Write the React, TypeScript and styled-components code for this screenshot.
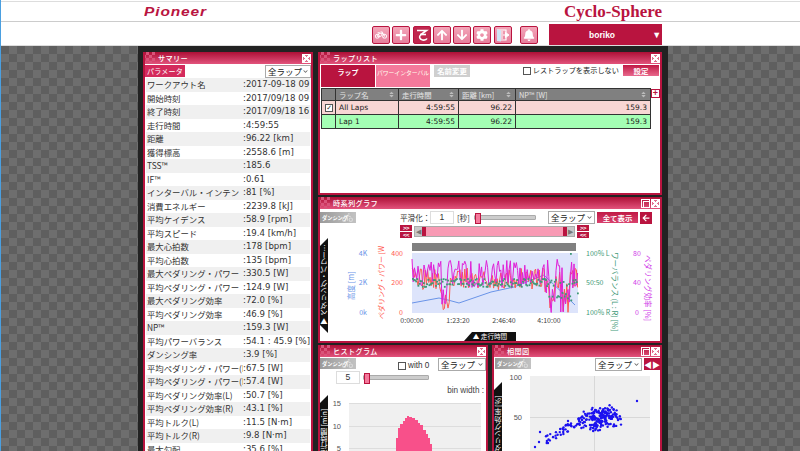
import React from 'react';
import styled, { createGlobalStyle } from 'styled-components';
import { FaBicycle, FaBiking, FaPlus, FaArrowUp, FaArrowDown, FaCog, FaBell, FaArrowLeft, FaSort, FaChevronDown } from 'react-icons/fa';

const crimson = '#b9143f';
const jp = '"Noto Sans CJK JP", "Liberation Sans", sans-serif';

const GlobalStyle = createGlobalStyle`
  html, body { margin: 0; padding: 0; background: #fff; overflow: hidden; }
  body { font-family: "Liberation Sans", "Noto Sans CJK JP", sans-serif; }
  * { box-sizing: border-box; }
`;

const Page = styled.div`
  width: 800px;
  height: 451px;
  overflow: hidden;
  display: flex;
  flex-direction: column;
  border-left: 1px solid #4a9fe0;
`;

const BrandBar = styled.header`
  height: 21px;
  flex: none;
  margin-top: 1px;
  border-top: 1px solid #ddd;
  border-bottom: 1px solid #ccc;
  padding: 0 138px 0 143px;
  display: flex;
  align-items: center;
  justify-content: space-between;
`;

const Pioneer = styled.span`
  font: italic bold 13px "Liberation Sans", sans-serif;
  letter-spacing: 0.75px;
  color: ${crimson};
  transform: scaleX(1.19);
  transform-origin: left center;
`;

const Cyclo = styled.span`
  font: bold 17px "Liberation Serif", serif;
  color: ${crimson};
`;

const ToolBar = styled.div`
  height: 24px;
  flex: none;
  padding: 2px 137px 0 371px;
  display: flex;
  align-items: flex-start;
  border-bottom: 1px solid #ddd;
`;

const ToolButton = styled.div<{ $dark?: boolean }>`
  width: 18px;
  height: 18px;
  margin-top: 2px;
  margin-right: 2.3px;
  flex: none;
  display: flex;
  align-items: center;
  justify-content: center;
  color: #fff;
  font-size: 12px;
  border: 1px solid ${crimson};
  border-radius: 2px;
  background: ${(p) => (p.$dark ? '#c0284f' : 'linear-gradient(#f3a6b9, #e67f9c)')};
`;

const BellButton = styled(ToolButton)`
  margin-left: 6px;
  margin-right: 11px;
`;

const UserSelect = styled.div`
  width: 113px;
  height: 21px;
  background: ${crimson};
  color: #fff;
  font: bold 8.5px "Liberation Sans", sans-serif;
  display: flex;
  align-items: center;
  justify-content: space-between;
  padding: 0 1px 0 40px;
  & > i {
    font-style: normal;
    font-size: 9px;
  }
`;

const Backdrop = styled.main`
  flex: 1;
  min-height: 0;
  padding-left: 137px;
  background-color: #666;
  background-image: repeating-conic-gradient(#6e6e6e 0 25%, #5f5f5f 0 50%);
  background-size: 16px 16px;
`;

const Center = styled.div`
  width: 530px;
  height: 500px;
  background: #222;
  padding: 6px 6px 0 5px;
  display: grid;
  grid-template-columns: 170px 344px;
  column-gap: 5px;
  align-items: start;
`;

const Stack = styled.div`
  display: flex;
  flex-direction: column;
  gap: 2px;
`;

const TwoUp = styled.div`
  display: grid;
  grid-template-columns: 170px 170px;
  column-gap: 4px;
`;

const Panel = styled.section<{ $h: number }>`
  position: relative;
  height: ${(p) => p.$h}px;
  background: #fff;
  border: 2px solid ${crimson};
  border-top: 0;
  overflow: hidden;
`;

const TitleBar = styled.div`
  height: 12px;
  margin: 0 -2px;
  padding-right: 2px;
  display: flex;
  align-items: center;
  gap: 1px;
  color: #fff;
  font: 500 7.2px ${jp};
  letter-spacing: 0.3px;
  background: linear-gradient(#ad0f36, #e2537c);
  &::before {
    content: '';
    width: 12px;
    height: 12px;
    margin-right: 2px;
    background: repeating-conic-gradient(#d9547a 0 25%, transparent 0 50%);
    background-size: 6px 6px;
  }
  & > span {
    flex: 1;
  }
`;

const WinBtn = styled.div`
  width: 9px;
  height: 9px;
  flex: none;
  border: 1px solid #fff;
`;

const CloseBtn = styled(WinBtn)`
  background:
    linear-gradient(45deg, transparent 42%, #fff 42% 58%, transparent 58%),
    linear-gradient(-45deg, transparent 42%, #fff 42% 58%, transparent 58%),
    #e0708e;
`;

const SquareBtn = styled(WinBtn)`
  &::after {
    content: '';
    display: block;
    width: 5px;
    height: 5px;
    margin: 1px;
    border: 1px solid #fff;
  }
`;

const SummaryHead = styled.div`
  height: 13px;
  margin-top: 1px;
  display: flex;
  align-items: flex-start;
  justify-content: space-between;
`;

const ParamTag = styled.div`
  width: 40px;
  height: 12px;
  background: #d42a5c;
  color: #fff;
  font: 7px/12px ${jp};
  letter-spacing: 0.2px;
  text-align: center;
`;

const LapSelect = styled.div<{ $w?: number }>`
  width: ${(p) => p.$w ?? 47}px;
  height: 13px;
  flex: none;
  border: 1px solid #aaa;
  background: #fff;
  color: #222;
  font: 8.5px/11px ${jp};
  padding: 0 2px;
  display: flex;
  align-items: center;
  justify-content: space-between;
  white-space: nowrap;
  & > svg {
    font-size: 5px;
    color: #666;
  }
`;

const SummaryRow = styled.div<{ $shade: boolean }>`
  height: 13.5px;
  margin: 0 1px;
  padding-left: 1px;
  display: flex;
  align-items: center;
  color: #333;
  font: 8.4px/13px ${jp};
  white-space: nowrap;
  overflow: hidden;
  background: ${(p) => (p.$shade ? '#f0f0f0' : '#fff')};
`;

const RowLabel = styled.div`
  width: 96px;
  flex: none;
  overflow: hidden;
`;

const RowValue = styled.div`
  font-family: "DejaVu Sans", ${jp};
  font-size: 8.6px;
`;

const LapTabs = styled.div`
  height: 24px;
  padding: 1px 1px 0;
  display: flex;
  align-items: flex-start;
`;

const LapTab = styled.div<{ $active?: boolean }>`
  width: 54px;
  height: 22px;
  margin-right: ${(p) => (p.$active ? '1px' : '0')};
  color: ${(p) => (p.$active ? '#fff' : '#ffe')};
  background: ${(p) => (p.$active ? '#b9143f' : '#f4799b')};
  font: ${(p) => (p.$active ? 'bold 7px' : '5.8px')}/15px ${jp};
  text-align: center;
  white-space: nowrap;
  overflow: hidden;
`;

const RenameBtn = styled.div`
  width: 36px;
  height: 12px;
  margin-left: 4px;
  background: #cfcfcf;
  color: #fff;
  font: bold 7.4px/12px ${jp};
  text-align: center;
`;

const RestToggle = styled.label`
  margin-left: auto;
  display: flex;
  align-items: center;
  gap: 2px;
  font: 7.2px/11px ${jp};
  color: #222;
  white-space: nowrap;
`;

const CheckBox = styled.span<{ $checked?: boolean }>`
  display: block;
  width: 8px;
  height: 8px;
  flex: none;
  border: 1px solid #555;
  background: #fff;
  color: #333;
  font: bold 7px/6px "DejaVu Sans", sans-serif;
  &::after {
    content: '${(p) => (p.$checked ? '✓' : '')}';
  }
`;

const SettingBtn = styled.div`
  width: 36px;
  height: 11px;
  margin-left: 4px;
  background: linear-gradient(#c01a46, #e8688c);
  color: #fff;
  font: bold 7.4px/11px ${jp};
  text-align: center;
`;

const TableRow = styled.div`
  display: flex;
  align-items: flex-start;
  padding-left: 1px;
`;

const LapTable = styled.table`
  width: 330px;
  flex: none;
  border-collapse: collapse;
  table-layout: fixed;
  font: 7.5px "DejaVu Sans", ${jp};
  & th, & td {
    border: 1px solid #333;
    padding: 0 3px;
    white-space: nowrap;
  }
  & th {
    height: 12px;
    background: #808080;
    color: #e4e4e4;
    font: 7.4px ${jp};
    text-align: left;
  }
  & td {
    height: 14px;
    color: #222;
    text-align: right;
  }
  & td:nth-child(2) {
    text-align: left;
  }
  & th > svg {
    float: right;
    margin-top: 2px;
    font-size: 7px;
    color: #bbb;
  }
`;

const LapRow = styled.tr<{ $bg: string }>`
  background: ${(p) => p.$bg};
`;

const PlusBtn = styled.div`
  width: 9px;
  height: 9px;
  flex: none;
  margin-top: 1px;
  border: 1px solid ${crimson};
  color: ${crimson};
  font: bold 9px/7px "Liberation Sans", sans-serif;
  text-align: center;
`;

const DancingBadge = styled.div`
  position: relative;
  width: 36px;
  height: 11px;
  flex: none;
  background: linear-gradient(90deg, #9a9a9a, #c2c2c2);
  color: #fff;
  font: bold 5.2px/12px ${jp};
  padding-left: 2px;
  white-space: nowrap;
  overflow: hidden;
  & > svg {
    position: absolute;
    right: 3px;
    top: 0;
    font-size: 11px;
    color: rgba(255, 255, 255, 0.45);
  }
`;

const Controls = styled.div`
  height: 13px;
  margin-top: 2px;
  display: flex;
  align-items: center;
  color: #333;
  font: 7.6px ${jp};
  white-space: nowrap;
`;

const SmoothLabel = styled.span`
  margin-left: 44px;
  width: 30px;
`;

const SecondsLabel = styled.span`
  width: 20px;
  padding-left: 3px;
`;

const NumBox = styled.div<{ $w: number }>`
  width: ${(p) => p.$w}px;
  height: 13px;
  flex: none;
  border: 1px solid #ddd;
  background: #fff;
  font: 8.6px/11px "Liberation Sans", sans-serif;
  text-align: center;
  color: #333;
`;

const SliderTrack = styled.div<{ $w: number }>`
  position: relative;
  width: ${(p) => p.$w}px;
  height: 5px;
  flex: none;
  background: #ccc;
  border: 1px solid #aaa;
  border-radius: 1px;
  &::before {
    content: '';
    position: absolute;
    left: 0;
    top: -3px;
    width: 4px;
    height: 9px;
    background: #f4799b;
    border: 1px solid ${crimson};
  }
`;

const SpacedSelect = styled(LapSelect)`
  margin-left: 12px;
`;

const AllBtn = styled.div`
  width: 41px;
  height: 11px;
  margin-left: 2px;
  background: linear-gradient(#c01a46, #d8406c);
  color: #fff;
  font: bold 7.4px/11px ${jp};
  text-align: center;
`;

const IconBtn = styled.div<{ $w: number; $ml: number }>`
  width: ${(p) => p.$w}px;
  height: 12px;
  margin-left: ${(p) => p.$ml}px;
  flex: none;
  background: ${crimson};
  color: #fff;
  font-size: 8px;
  display: flex;
  align-items: center;
  justify-content: center;
`;

const RangeRow = styled.div`
  margin-left: 80px;
  height: 14px;
  display: flex;
  align-items: center;
  gap: 2px;
`;

const StepPair = styled.div`
  width: 12px;
  display: flex;
  flex-direction: column;
  gap: 1px;
`;

const StepBtn = styled.div`
  height: 6px;
  background: ${crimson};
  color: #fff;
  font: bold 6px/6px "Liberation Sans", sans-serif;
  text-align: center;
  letter-spacing: -0.5px;
`;

const RangeBar = styled.div`
  width: 161px;
  height: 11px;
  display: flex;
  background: #ccc;
  border: 1px solid #aaa;
`;

const RangeEnd = styled.div`
  width: 7px;
  background: #c8c8c8;
  flex: none;
  color: #777;
  font: 7px/9px "Liberation Sans", sans-serif;
  text-align: center;
`;

const RangeFill = styled.div`
  flex: 1;
  background: #f89ab4;
  border-left: 4px solid ${crimson};
  border-right: 4px solid ${crimson};
`;

const Chart = styled.svg`
  display: block;
  font-family: ${jp};
`;

const SideTab = styled.div<{ $top: number; $h: number }>`
  position: absolute;
  left: 0;
  top: ${(p) => p.$top}px;
  width: 8px;
  height: ${(p) => p.$h}px;
  background: #111;
  clip-path: polygon(0 0, 100% 8px, 100% calc(100% - 8px), 0 100%);
  color: #fff;
  font: 7.2px/8px ${jp};
  writing-mode: vertical-rl;
  transform: rotate(180deg);
  white-space: nowrap;
  overflow: hidden;
  padding-top: 8px;
`;

const BottomTab = styled.div`
  position: absolute;
  left: 144px;
  bottom: 0;
  width: 52px;
  height: 9px;
  background: #111;
  clip-path: polygon(8px 0, 100% 0, 100% 100%, 0 100%);
  color: #fff;
  font: 6.6px/9px ${jp};
  text-align: center;
  white-space: nowrap;
`;

const HistRow = styled.div`
  display: flex;
  align-items: flex-start;
  padding-top: 1px;
  height: 14px;
`;

const WithZero = styled.label`
  margin-left: 42px;
  width: 40px;
  padding-top: 3px;
  display: flex;
  align-items: center;
  gap: 2px;
  font: 8.2px "Liberation Sans", sans-serif;
  color: #333;
`;

const BinRow = styled.div`
  height: 13px;
  padding-left: 16px;
  display: flex;
  align-items: center;
  gap: 3px;
`;

const BinLabel = styled.div`
  height: 14px;
  padding: 2px 2px 0 0;
  font: 8.2px "Liberation Sans", sans-serif;
  color: #444;
  text-align: right;
`;

const CorrRow = styled.div`
  height: 15px;
  padding: 1px 0 0 1px;
  display: flex;
  align-items: flex-start;
`;

const CorrSelect = styled(LapSelect)`
  margin-left: auto;
`;

const Dancing = () => (
  <DancingBadge>
    ダンシング
    <FaBiking />
  </DancingBadge>
);

const SwirlIcon = () => (
  <svg width="14" height="14" viewBox="0 0 14 14" fill="none" stroke="#fff" strokeWidth="1.6">
    <path d="M2 2.5h9.5L6 6.5c-2.5 2-1.5 5 1.5 5.5 2 .3 4-.5 4.5-1.5" />
    <path d="M5 6.500h6" />
  </svg>
);

const ExitIcon = () => (
  <svg width="14" height="14" viewBox="0 0 14 14" fill="none">
    <path d="M1 1h6v12H1z" fill="#fff" opacity="0.5" />
    <path d="M1 1l4 1.5v11L1 13z" fill="#cfe6f5" />
    <path d="M7 2h3v3M7 12h3V9" stroke="#fff" strokeWidth="1.2" />
    <path d="M7 7h4M9.5 4.5L13 7l-3.5 2.5z" fill="#fff" stroke="#fff" />
  </svg>
);

const summary: [string, string][] = [
  ['ワークアウト名', ':2017-09-18 09'],
  ['開始時刻', ':2017/09/18 09'],
  ['終了時刻', ':2017/09/18 16'],
  ['走行時間', ':4:59:55'],
  ['距離', ':96.22 [km]'],
  ['獲得標高', ':2558.6 [m]'],
  ['TSS™', ':185.6'],
  ['IF™', ':0.61'],
  ['インターバル・インテン', ':81 [%]'],
  ['消費エネルギー', ':2239.8 [kJ]'],
  ['平均ケイデンス', ':58.9 [rpm]'],
  ['平均スピード', ':19.4 [km/h]'],
  ['最大心拍数', ':178 [bpm]'],
  ['平均心拍数', ':135 [bpm]'],
  ['最大ペダリング・パワー', ':330.5 [W]'],
  ['平均ペダリング・パワー', ':124.9 [W]'],
  ['最大ペダリング効率', ':72.0 [%]'],
  ['平均ペダリング効率', ':46.9 [%]'],
  ['NP™', ':159.3 [W]'],
  ['平均パワーバランス', ':54.1 : 45.9 [%]'],
  ['ダンシング率', ':3.9 [%]'],
  ['平均ペダリング・パワー(L)', ':67.5 [W]'],
  ['平均ペダリング・パワー(R)', ':57.4 [W]'],
  ['平均ペダリング効率(L)', ':50.7 [%]'],
  ['平均ペダリング効率(R)', ':43.1 [%]'],
  ['平均トルク(L)', ':11.5 [N·m]'],
  ['平均トルク(R)', ':9.8 [N·m]'],
  ['最大勾配', ':35.6 [%]'],
];

// fixed pseudo random so the charts draw the same every time
const makeRandom = (seed: number) => () => {
  seed = (seed * 16807) % 2147483647;
  return seed / 2147483647;
};

const plotTop = 15;
const plotLeft = 92;
const plotRight = 258;
const plotBottom = 75;

const isDropout = (x: number) => (x > 120 && x < 130) || (x > 225 && x < 235) || (x > 240 && x < 250);

const seriesPath = (seed: number, base: number, spread: number) => {
  const rnd = makeRandom(seed);
  let d = '';
  for (let x = plotLeft; x <= plotRight; x += 1.2) {
    let y = base + (rnd() - 0.5) * spread;
    if (isDropout(x) && rnd() > 0.25) y = plotBottom - rnd() * 25;
    d += `${d ? 'L' : 'M'}${x.toFixed(1)} ${Math.min(y, plotBottom).toFixed(1)}`;
  }
  return d;
};

const balanceDots = () => {
  const rnd = makeRandom(77);
  const dots: { x: number; y: number }[] = [];
  for (let x = plotLeft; x <= plotRight; x += 1.1) {
    dots.push({ x, y: 44 + (rnd() - 0.5) * 8 + (x > 225 && rnd() > 0.7 ? 14 : 0) });
  }
  dots.push({ x: 250, y: 15 });
  return dots;
};

const scatterDots = () => {
  const rnd = makeRandom(4242);
  const dots: { x: number; y: number }[] = [];
  for (let i = 0; i < 190; i++) {
    const a = (rnd() + rnd()) / 2;
    const b = (rnd() + rnd()) / 2;
    dots.push({ x: 84 + a * 44, y: 33 + b * 26 - (a - 0.5) * 6 });
  }
  for (let i = 0; i < 45; i++) {
    const a = rnd();
    dots.push({ x: 50 + a * 40, y: 69 - a * 22 + (rnd() - 0.5) * 8 });
  }
  [[41, 75], [45, 70], [54, 71], [46, 60], [72, 53], [74, 49]].forEach(([x, y]) => dots.push({ x, y }));
  dots.push({ x: 143, y: 29 });
  return dots;
};

// top edge of the histogram bars, one per bin
const histogramBars = [
  [72, 61], [74, 53], [76, 40], [78, 30], [80, 26], [83, 23], [85, 20], [87, 18], [89, 19], [92, 20], [95, 22],
  [98, 25], [100, 27], [103, 32], [106, 36], [108, 40], [110, 46], [112, 53], [114, 61],
];

const histogramPath = () => {
  let d = 'M72 61';
  histogramBars.forEach(([x, y], i) => {
    const next = histogramBars[i + 1];
    d += `V${y}H${next ? next[0] : x}`;
  });
  return `${d}V61Z`;
};

const TimeChart = () => (
  <Chart width="340" height="104" viewBox="0 0 340 104">
    <rect x={plotLeft} y="5" width="164" height="8" fill="#808080" />
    <rect x={plotLeft} y={plotTop} width={plotRight - plotLeft} height={plotBottom - plotTop} fill="#dde4fb" />
    <polyline
      points="92,65 119,60 128,62 139,65 171,54 194,49 224,37 255,67"
      fill="none"
      stroke="#6a94e8"
      strokeWidth="1"
    />
    <path d={seriesPath(31, 41, 22)} fill="none" stroke="#ff5a50" strokeWidth="1" />
    <path d={seriesPath(97, 36, 30)} fill="none" stroke="#e020d8" strokeWidth="1" />
    {balanceDots().map((d, i) => (
      <rect key={i} x={d.x} y={d.y} width="1.8" height="1.8" fill="#3f9a78" />
    ))}
    <g fontSize="7" fill="#6a94e8" textAnchor="middle">
      <text x="43" y="18">4K</text>
      <text x="43" y="47">2K</text>
      <text x="43" y="77">0k</text>
    </g>
    <text transform="translate(34 62) rotate(-90)" fontSize="7.5" fill="#6a94e8">高度 [m]</text>
    <g fontSize="7" fill="#ff5a50" textAnchor="end">
      <text x="83" y="18">400</text>
      <text x="83" y="47">200</text>
      <text x="83" y="77">0</text>
    </g>
    <text transform="translate(64 81) rotate(-90)" fontSize="7" fill="#ff5a50">ペダリング・パワー [W</text>
    <g fontSize="7" fill="#444" textAnchor="middle">
      <text x="92" y="85">0:00:00</text>
      <text x="138" y="85">1:23:20</text>
      <text x="184" y="85">2:46:40</text>
      <text x="229" y="85">4:10:00</text>
    </g>
    <g fontSize="7" fill="#3f9a78">
      <text x="266" y="18">100% L</text>
      <text x="266" y="47">50:50</text>
      <text x="266" y="77">100% R</text>
    </g>
    <text transform="translate(292 14) rotate(90)" fontSize="7.5" fill="#3f9a78">ワーバランス (L : R) [%]</text>
    <g fontSize="7" fill="#d040e8" textAnchor="middle">
      <text x="317" y="18">80</text>
      <text x="317" y="47">40</text>
      <text x="317" y="77">0</text>
    </g>
    <text transform="translate(325 17) rotate(90)" fontSize="7.5" fill="#d040e8">ペダリング効率 [%]</text>
  </Chart>
);

const HistChart = () => (
  <Chart width="166" height="61" viewBox="0 0 166 61">
    <rect x="29" y="5" width="132" height="56" fill="#f0f0f0" />
    <path d="M29 5.500H161M29 28.500H161M29 50.500H161" stroke="#ddd" />
    <path d={histogramPath()} fill="#f8508a" />
    <g fontSize="7.5" fontFamily="Liberation Sans" fill="#555" textAnchor="end">
      <text x="21" y="8">15</text>
      <text x="21" y="31">10</text>
      <text x="21" y="53">5</text>
    </g>
  </Chart>
);

const ScatterChart = () => (
  <Chart width="166" height="82" viewBox="0 0 166 82">
    <rect x="36" y="4" width="120" height="78" fill="#efefef" />
    <path d="M36 45.500H156M100.500 4V82" stroke="#d8d8d8" />
    <g fontSize="7.500" fontFamily="Liberation Sans" fill="#555" textAnchor="end">
      <text x="28" y="8">100</text>
      <text x="28" y="48">50</text>
    </g>
    {scatterDots().map((d, i) => (
      <circle key={i} cx={d.x} cy={d.y} r="1.2" fill="#1c12f0" />
    ))}
  </Chart>
);

export default function App() {
  return (
    <>
      <GlobalStyle />
      <Page>
        <BrandBar>
          <Pioneer>Pioneer</Pioneer>
          <Cyclo>Cyclo-Sphere</Cyclo>
        </BrandBar>
        <ToolBar>
          <ToolButton><FaBicycle /></ToolButton>
          <ToolButton><FaPlus /></ToolButton>
          <ToolButton $dark><SwirlIcon /></ToolButton>
          <ToolButton><FaArrowUp /></ToolButton>
          <ToolButton><FaArrowDown /></ToolButton>
          <ToolButton><FaCog /></ToolButton>
          <ToolButton><ExitIcon /></ToolButton>
          <BellButton><FaBell /></BellButton>
          <UserSelect>
            boriko
            <i>▼</i>
          </UserSelect>
        </ToolBar>
        <Backdrop>
          <Center>
            <Panel $h={420}>
              <TitleBar>
                <span>サマリー</span>
                <CloseBtn />
              </TitleBar>
              <SummaryHead>
                <ParamTag>パラメータ</ParamTag>
                <LapSelect $w={46}>全ラップ<FaChevronDown /></LapSelect>
              </SummaryHead>
              {summary.map(([label, value], i) => (
                <SummaryRow key={label + i} $shade={i % 2 === 0}>
                  <RowLabel>{label}</RowLabel>
                  <RowValue>{value}</RowValue>
                </SummaryRow>
              ))}
            </Panel>
            <Stack>
              <Panel $h={143}>
                <TitleBar>
                  <span>ラップリスト</span>
                  <CloseBtn />
                </TitleBar>
                <LapTabs>
                  <LapTab $active>ラップ</LapTab>
                  <LapTab>パワーインターバル</LapTab>
                  <RenameBtn>名前変更</RenameBtn>
                  <RestToggle>
                    <CheckBox />
                    レストラップを表示しない
                  </RestToggle>
                  <SettingBtn>設定</SettingBtn>
                </LapTabs>
                <TableRow>
                  <LapTable>
                    <colgroup>
                      <col width="14" />
                      <col width="63" />
                      <col width="60" />
                      <col width="57" />
                      <col />
                    </colgroup>
                    <thead>
                      <tr>
                        <th />
                        <th>ラップ名<FaSort /></th>
                        <th>走行時間<FaSort /></th>
                        <th>距離 [km]<FaSort /></th>
                        <th>NP™ [W]<FaSort /></th>
                      </tr>
                    </thead>
                    <tbody>
                      <LapRow $bg="#f8d6d4">
                        <td><CheckBox $checked /></td>
                        <td>All Laps</td>
                        <td>4:59:55</td>
                        <td>96.22</td>
                        <td>159.3</td>
                      </LapRow>
                      <LapRow $bg="#a4ffb4">
                        <td />
                        <td>Lap 1</td>
                        <td>4:59:55</td>
                        <td>96.22</td>
                        <td>159.3</td>
                      </LapRow>
                    </tbody>
                  </LapTable>
                  <PlusBtn>+</PlusBtn>
                </TableRow>
              </Panel>
              <Panel $h={146}>
                <TitleBar>
                  <span>時系列グラフ</span>
                  <SquareBtn />
                  <CloseBtn />
                </TitleBar>
                <Controls>
                  <Dancing />
                  <SmoothLabel>平滑化：</SmoothLabel>
                  <NumBox $w={24}>1</NumBox>
                  <SecondsLabel>[秒]</SecondsLabel>
                  <SliderTrack $w={62} />
                  <SpacedSelect>全ラップ<FaChevronDown /></SpacedSelect>
                  <AllBtn>全て表示</AllBtn>
                  <IconBtn $w={12} $ml={2}><FaArrowLeft /></IconBtn>
                </Controls>
                <RangeRow>
                  <StepPair>
                    <StepBtn>&gt;&gt;</StepBtn>
                    <StepBtn>&lt;&lt;</StepBtn>
                  </StepPair>
                  <RangeBar>
                    <RangeEnd>◀</RangeEnd>
                    <RangeFill />
                    <RangeEnd>▶</RangeEnd>
                  </RangeBar>
                  <StepPair>
                    <StepBtn>&gt;&gt;</StepBtn>
                    <StepBtn>&lt;&lt;</StepBtn>
                  </StepPair>
                </RangeRow>
                <TimeChart />
                <SideTab $top={41} $h={95}>▼ ペダリング・パワー…</SideTab>
                <BottomTab>▲ 走行時間</BottomTab>
              </Panel>
              <TwoUp>
                <Panel $h={110}>
                  <TitleBar>
                    <span>ヒストグラム</span>
                    <CloseBtn />
                  </TitleBar>
                  <HistRow>
                    <Dancing />
                    <WithZero>
                      <CheckBox />
                      with 0
                    </WithZero>
                    <LapSelect $w={48}>全ラップ<FaChevronDown /></LapSelect>
                  </HistRow>
                  <BinRow>
                    <NumBox $w={24}>5</NumBox>
                    <SliderTrack $w={66} />
                  </BinRow>
                  <BinLabel>bin width :</BinLabel>
                  <HistChart />
                  <SideTab $top={50} $h={70}>走行時間 [min]</SideTab>
                </Panel>
                <Panel $h={110}>
                  <TitleBar>
                    <span>相関図</span>
                    <SquareBtn />
                    <CloseBtn />
                  </TitleBar>
                  <CorrRow>
                    <Dancing />
                    <CorrSelect>全ラップ<FaChevronDown /></CorrSelect>
                    <IconBtn $w={16} $ml={2}>◀▶</IconBtn>
                  </CorrRow>
                  <ScatterChart />
                  <SideTab $top={37} $h={85}>ペダリング効率 [%]</SideTab>
                </Panel>
              </TwoUp>
            </Stack>
          </Center>
        </Backdrop>
      </Page>
    </>
  );
}
